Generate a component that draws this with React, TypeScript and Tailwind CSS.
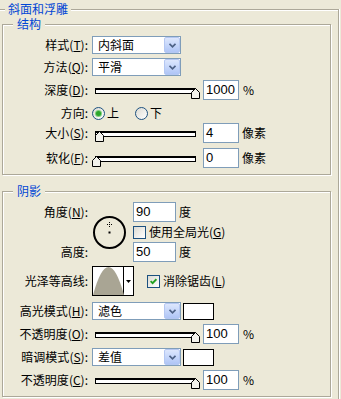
import React from 'react';

// Photoshop layer style pane: Bevel and Emboss, XP look

const Label = ({ t, m }: { t: string; m?: string }) => (
  <span className="w-[85px] shrink-0 text-right">
    {t}
    {m && (
      <>
        (<span className="underline underline-offset-[1px]">{m}</span>)
      </>
    )}
    :
  </span>
);

const Row = ({ className = '', children }: { className?: string; children: React.ReactNode }) => (
  <div className={`flex h-[20px] items-center ${className}`}>{children}</div>
);

const Select = ({ value }: { value: string }) => (
  <div className="flex h-[18px] w-[89px] items-stretch border border-[#7F9DB9] bg-white">
    <span className="flex-1 pl-[5px] leading-[16px]">{value}</span>
    <span className="flex w-[16px] items-center justify-center rounded-[2px] border border-[#B4C7F2] bg-linear-to-b from-[#DDE7FD] to-[#AFC5F6]">
      <svg width="7" height="5" viewBox="0 0 7 5">
        <path d="M0.5 0.8 L3.5 3.8 L6.5 0.8" fill="none" stroke="#4D6185" strokeWidth="1.7" />
      </svg>
    </span>
  </div>
);

const Slider = ({ pos }: { pos: number }) => (
  <div className="relative h-[20px] w-[108px] shrink-0">
    <div className="absolute left-[3px] right-[4px] top-[8px] h-[6px] border border-t-2 border-black bg-white" />
    <svg className="absolute top-[8px]" style={{ left: Math.round(pos * 99) }} width="10" height="11" viewBox="0 0 10 11">
      <path d="M0.5 10.5V4.5L4.5 0.5L8.5 4.5V10.5Z" fill="#F3F2EC" stroke="#000" />
    </svg>
  </div>
);

const NumBox = ({ v, wide }: { v: string; wide?: boolean }) => (
  <div
    className={`h-[20px] shrink-0 border border-[#7F9DB9] bg-white pl-[2px] font-['Liberation_Sans',sans-serif] text-[13px] leading-[18px] ${
      wide ? 'w-[43px]' : 'w-[36px]'
    }`}
  >
    {v}
  </div>
);

const Radio = ({ on }: { on?: boolean }) => (
  <span className="flex h-[13px] w-[13px] shrink-0 items-center justify-center rounded-full border border-[#1C5180] bg-linear-to-br from-[#DCDBD3] to-white">
    {on && <span className="h-[5px] w-[5px] rounded-full bg-[#2CA52C] shadow-[0_0_0_1px_#7FCF7F]" />}
  </span>
);

const Check = ({ on }: { on?: boolean }) => (
  <span className="flex h-[13px] w-[13px] shrink-0 items-center justify-center border border-[#1C5180] bg-linear-to-br from-[#DCDBD3] to-white">
    {on && (
      <svg width="7" height="7" viewBox="0 0 7 7">
        <path d="M0.6 3.2 L2.6 5.2 L6.4 1.2" fill="none" stroke="#21A121" strokeWidth="1.8" />
      </svg>
    )}
  </span>
);

const Swatch = () => <div className="ml-[2px] h-[17px] w-[31px] border border-black bg-white" />;

const Group = ({ title, className = '', children }: { title: string; className?: string; children: React.ReactNode }) => (
  <fieldset
    className={`ml-[2px] w-[329px] border border-[#ACA899] pb-[6px] pt-[4px] shadow-[inset_1px_1px_0_#fff,1px_1px_0_#fff] ${className}`}
  >
    <legend className="ml-[10px] bg-[#ECE9D8] px-[4px] text-[#0046D5]">{title}</legend>
    {children}
  </fieldset>
);

export default function App() {
  return (
    <div className="h-[399px] w-[341px] overflow-hidden bg-[#ECE9D8] font-['Noto_Sans_CJK_SC',sans-serif] text-[12px] leading-[14px] text-black">
      <fieldset className="mt-[1px] w-[339px] border-r border-t border-[#ACA899] pb-[10px] shadow-[inset_0_1px_0_#fff,1px_0_0_#fff]">
        <legend className="ml-[5px] bg-[#ECE9D8] px-[3px] leading-[16px] text-[#0046D5]">斜面和浮雕</legend>

        <Group title="结构">
          <Row>
            <Label t="样式" m="T" />
            <div className="ml-[4px]">
              <Select value="内斜面" />
            </div>
          </Row>
          <Row className="mt-[2px]">
            <Label t="方法" m="Q" />
            <div className="ml-[4px]">
              <Select value="平滑" />
            </div>
          </Row>
          <Row className="mt-[3px]">
            <Label t="深度" m="D" />
            <div className="ml-[4px] flex items-center">
              <Slider pos={1} />
              <div className="ml-[3px]">
                <NumBox v="1000" />
              </div>
              <span className="ml-[4px]">%</span>
            </div>
          </Row>
          <Row className="mt-[3px]">
            <Label t="方向" />
            <div className="ml-[4px] flex items-center">
              <Radio on />
              <span className="ml-[2px]">上</span>
              <span className="ml-[16px]">
                <Radio />
              </span>
              <span className="ml-[2px]">下</span>
            </div>
          </Row>
          <Row>
            <Label t="大小" m="S" />
            <div className="ml-[4px] flex items-center">
              <Slider pos={0.03} />
              <div className="ml-[3px]">
                <NumBox v="4" />
              </div>
              <span className="ml-[3px]">像素</span>
            </div>
          </Row>
          <Row className="mt-[5px]">
            <Label t="软化" m="F" />
            <div className="ml-[4px] flex items-center">
              <Slider pos={0} />
              <div className="ml-[3px]">
                <NumBox v="0" />
              </div>
              <span className="ml-[3px]">像素</span>
            </div>
          </Row>
        </Group>

        <Group title="阴影" className="mt-[9px]">
          <div className="flex">
            <div className="flex w-[85px] shrink-0 flex-col">
              <div className="flex h-[20px] items-center justify-end">
                角度(<span className="underline underline-offset-[1px]">N</span>):
              </div>
              <div className="h-[20px]" />
              <div className="flex h-[20px] items-center justify-end">高度:</div>
            </div>
            <div className="ml-[4px] flex w-[41px] shrink-0 items-center">
              <svg width="35" height="35" viewBox="0 0 35 35">
                <circle cx="17.5" cy="17.5" r="15.5" fill="none" stroke="#000" strokeWidth="2" />
                <path d="M17.5 7V12M15 9.5H20" stroke="#000" strokeWidth="1" strokeDasharray="1 1" />
                <rect x="16.5" y="16.5" width="2" height="2" fill="#000" />
              </svg>
            </div>
            <div className="flex flex-col">
              <div className="flex h-[20px] items-center">
                <NumBox v="90" wide />
                <span className="ml-[3px]">度</span>
              </div>
              <div className="flex h-[20px] items-center">
                <Check />
                <span className="ml-[3px]">
                  使用全局光(<span className="underline underline-offset-[1px]">G</span>)
                </span>
              </div>
              <div className="flex h-[20px] items-center">
                <NumBox v="50" wide />
                <span className="ml-[3px]">度</span>
              </div>
            </div>
          </div>

          <div className="mt-[4px] flex h-[30px] items-center">
            <Label t="光泽等高线" />
            <div className="ml-[4px] flex h-[30px] w-[42px] border border-black bg-white">
              <div className="h-full w-[31px] border-r border-black">
                <svg width="31" height="28" viewBox="0 0 31 28">
                  <path d="M0 28 Q15.5 -28 31 28 Z" fill="#A9A594" />
                </svg>
              </div>
              <div className="flex flex-1 items-center justify-center">
                <svg width="5" height="3" viewBox="0 0 5 3">
                  <path d="M0 0H5L2.5 3Z" fill="#000" />
                </svg>
              </div>
            </div>
            <span className="ml-[13px]">
              <Check on />
            </span>
            <span className="ml-[3px]">
              消除锯齿(<span className="underline underline-offset-[1px]">L</span>)
            </span>
          </div>

          <Row className="mt-[5px]">
            <Label t="高光模式" m="H" />
            <div className="ml-[4px] flex items-center">
              <Select value="滤色" />
              <Swatch />
            </div>
          </Row>
          <Row className="mt-[3px]">
            <Label t="不透明度" m="O" />
            <div className="ml-[4px] flex items-center">
              <Slider pos={1} />
              <div className="ml-[3px]">
                <NumBox v="100" />
              </div>
              <span className="ml-[4px]">%</span>
            </div>
          </Row>
          <Row className="mt-[3px]">
            <Label t="暗调模式" m="S" />
            <div className="ml-[4px] flex items-center">
              <Select value="差值" />
              <Swatch />
            </div>
          </Row>
          <Row className="mt-[3px]">
            <Label t="不透明度" m="C" />
            <div className="ml-[4px] flex items-center">
              <Slider pos={1} />
              <div className="ml-[3px]">
                <NumBox v="100" />
              </div>
              <span className="ml-[4px]">%</span>
            </div>
          </Row>
        </Group>
      </fieldset>
    </div>
  );
}
